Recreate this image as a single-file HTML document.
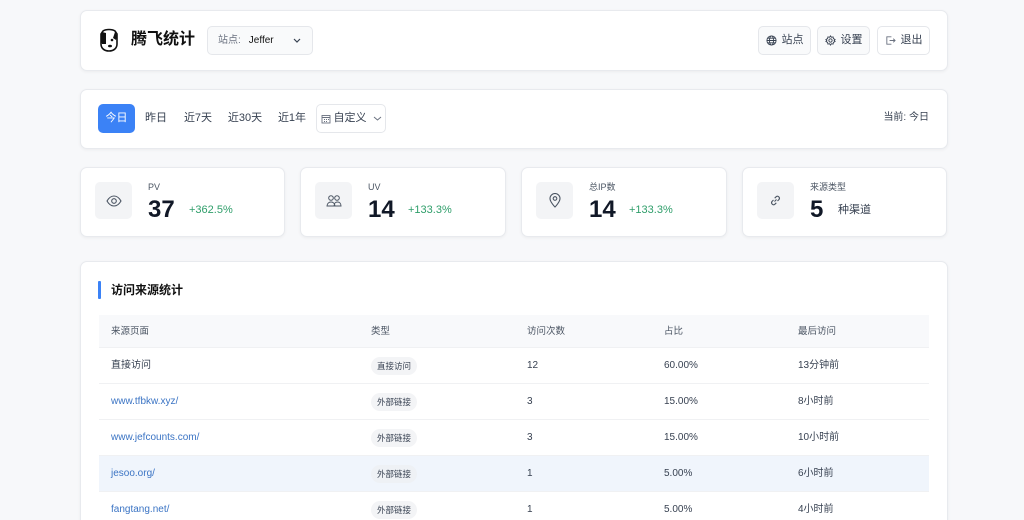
<!DOCTYPE html>
<html><head><meta charset="utf-8">
<style>
*{box-sizing:border-box;margin:0;padding:0;line-height:1.2}
html,body{width:1024px;height:520px;overflow:hidden}
body{background:#f7f8fa;font-family:"Liberation Sans","Noto Sans CJK SC",sans-serif;color:#1f2937;position:relative}
.card{position:absolute;background:#fff;border:1px solid #e8eaee;border-radius:7px;box-shadow:0 1px 3px rgba(0,0,0,.05)}
.abs{position:absolute}
.btn{position:absolute;top:15px;height:29px;border:1px solid #e5e7eb;border-radius:5px;background:#f9fafb;font-size:11px;color:#374151;display:flex;align-items:center;justify-content:center;gap:5px}
.tab{position:absolute;top:14px;height:29px;font-size:11px;color:#374151;display:flex;align-items:center;justify-content:center}
.ico{position:absolute;left:14px;top:14px;width:37px;height:37px;border-radius:5px;background:#f3f4f6;display:flex;align-items:center;justify-content:center}
.lbl{position:absolute;left:67px;top:13px;font-size:9px;line-height:12px;color:#4b5563}
.num{position:absolute;left:67px;top:28px;font-size:24px;line-height:28px;font-weight:bold;color:#111827}
.pct{position:absolute;top:35px;font-size:11px;line-height:14px;color:#2f9e6a}
.row{position:absolute;left:18px;width:830px;height:36px;border-bottom:1px solid #f0f1f3;font-size:10px;color:#374151}
.row span{position:absolute;top:11px;line-height:14px;height:14px;display:flex;align-items:center}
.row span.tag{background:#f3f4f6;border-radius:9px;padding:0 6px;font-size:8.5px;top:9px;height:18px}
.link{color:#3b74c4}
</style></head><body>
<div class="card" style="left:80px;top:10px;width:868px;height:61px">
  <svg class="abs" style="left:18px;top:17px" width="20" height="24" viewBox="0 0 20 24"><path d="M4 3c3-2 9-2 12 0l2 3v10c0 4-3 7-8 7s-8-3-8-7V6z" fill="#fff" stroke="#111" stroke-width="1.6"/><path d="M3 4c-2 2-2 8 0 12h4V5z" fill="#111"/><path d="M16 4c2 2 2 6 1 8l-3-2z" fill="#111"/><circle cx="13" cy="12" r="1.3" fill="#111"/><ellipse cx="11" cy="18" rx="2" ry="1.3" fill="#111"/></svg>
  <div class="abs" style="left:50px;top:19px;font-size:16px;line-height:20px;font-weight:bold;color:#111">腾飞统计</div>
  <div class="abs" style="left:126px;top:15px;width:106px;height:29px;border:1px solid #e5e7eb;border-radius:5px;background:#f9fafb;font-size:10px;display:flex;align-items:center">
    <span style="margin-left:10px;color:#6b7280;line-height:12px">站点:</span><span style="margin-left:8px;color:#111;line-height:12px">Jeffer</span>
    <svg class="abs" style="left:85px;top:11px" width="8" height="6" viewBox="0 0 8 6"><path d="M1 1l3 3 3-3" fill="none" stroke="#374151" stroke-width="1.2"/></svg>
  </div>
  <div class="btn" style="left:677px;width:53px"><svg width="11" height="11" viewBox="0 0 12 12" fill="none" stroke="#374151" stroke-width="1"><circle cx="6" cy="6" r="5"/><ellipse cx="6" cy="6" rx="2.2" ry="5"/><path d="M1 6h10M1.8 3.5h8.4M1.8 8.5h8.4"/></svg>站点</div>
  <div class="btn" style="left:736px;width:53px"><svg width="11" height="11" viewBox="0 0 12 12" fill="none" stroke="#374151" stroke-width="1"><circle cx="6" cy="6" r="1.8"/><path d="M6 1l1 1.5 1.8-.4.4 1.8L11 5l-1 1 1 1-1.8 1.1-.4 1.8L7 9.5 6 11l-1-1.5-1.8.4-.4-1.8L1 7l1-1-1-1 1.8-1.1.4-1.8L5 2.5z"/></svg>设置</div>
  <div class="btn" style="left:796px;width:53px;background:#fff"><svg width="11" height="11" viewBox="0 0 12 12" fill="none" stroke="#6b7280" stroke-width="1"><path d="M7 2H2v8h5M5 6h6M9 4l2 2-2 2"/></svg>退出</div>
</div>
<div class="card" style="left:80px;top:89px;width:868px;height:60px">
  <div class="tab" style="left:17px;width:37px;background:#3b82f6;color:#fff;border-radius:5px">今日</div>
  <div class="tab" style="left:60px;width:30px">昨日</div>
  <div class="tab" style="left:100px;width:34px">近7天</div>
  <div class="tab" style="left:145px;width:38px">近30天</div>
  <div class="tab" style="left:196px;width:30px">近1年</div>
  <div class="tab" style="left:235px;width:70px;border:1px solid #e5e7eb;border-radius:5px;gap:3px"><svg width="10" height="10" viewBox="0 0 10 10" fill="none" stroke="#6b7280" stroke-width=".9"><rect x="1" y="1.5" width="8" height="7.5"/><path d="M1 3.5h8M3 5.5h1M5 5.5h1M7 5.5h1M3 7.5h1M5 7.5h1"/></svg>自定义<svg width="9" height="6" viewBox="0 0 9 6" style="margin-left:3px"><path d="M1 1l3.5 3L8 1" fill="none" stroke="#6b7280" stroke-width="1"/></svg></div>
  <div class="abs" style="right:18px;top:21px;font-size:10px;line-height:14px;color:#374151">当前: 今日</div>
</div>

<div class="card" style="left:80px;top:167px;width:205px;height:70px">
  <div class="ico"><svg width="16" height="12" viewBox="0 0 16 12" fill="none" stroke="#4b5563" stroke-width="1.1"><path d="M1 6c2-3.5 4.5-5 7-5s5 1.5 7 5c-2 3.5-4.5 5-7 5S3 9.5 1 6z"/><circle cx="8" cy="6" r="2.3"/></svg></div>
  <div class="lbl">PV</div><div class="num">37</div><div class="pct" style="left:108px">+362.5%</div>
</div>
<div class="card" style="left:300px;top:167px;width:206px;height:70px">
  <div class="ico"><svg width="16" height="14" viewBox="0 0 16 14" fill="none" stroke="#4b5563" stroke-width="1"><circle cx="5" cy="4" r="2.3"/><circle cx="11" cy="4" r="2.3"/><path d="M1 12c0-2.5 2-4 4-4s4 1.5 4 4zM8 12c0-2.5 1.5-4 3.5-4S15 9.5 15 12z"/></svg></div>
  <div class="lbl">UV</div><div class="num">14</div><div class="pct" style="left:107px">+133.3%</div>
</div>
<div class="card" style="left:521px;top:167px;width:206px;height:70px">
  <div class="ico"><svg width="12" height="15" viewBox="0 0 12 15" fill="none" stroke="#4b5563" stroke-width="1.1"><path d="M6 14s5-5 5-8.5A5 5 0 0 0 1 5.5C1 9 6 14 6 14z"/><circle cx="6" cy="5.5" r="1.8"/></svg></div>
  <div class="lbl">总IP数</div><div class="num">14</div><div class="pct" style="left:107px">+133.3%</div>
</div>
<div class="card" style="left:742px;top:167px;width:205px;height:70px">
  <div class="ico"><svg width="13" height="13" viewBox="0 0 13 13" fill="none" stroke="#4b5563" stroke-width="1.1"><path d="M5.5 7.5l2-2M4.5 6l-1.5 1.5a2 2 0 0 0 2.8 2.8L7.3 8.8M8.5 7l1.5-1.5a2 2 0 0 0-2.8-2.8L5.7 4.2"/></svg></div>
  <div class="lbl">来源类型</div><div class="num">5</div><div class="abs" style="left:95px;top:35px;font-size:11px;line-height:14px;color:#374151">种渠道</div>
</div>

<div class="card" style="left:80px;top:261px;width:868px;height:280px">
  <div class="abs" style="left:17px;top:19px;width:3px;height:18px;background:#3b82f6;border-radius:1px"></div>
  <div class="abs" style="left:30px;top:20px;font-size:12px;line-height:16px;font-weight:bold;color:#111">访问来源统计</div>
  <div class="row" style="top:53px;height:33px;background:#f8f9fb;font-size:9.5px;color:#4b5563"><span style="left:12px;top:10px">来源页面</span><span style="left:272px;top:10px">类型</span><span style="left:428px;top:10px">访问次数</span><span style="left:565px;top:10px">占比</span><span style="left:699px;top:10px">最后访问</span></div>
  <div class="row" style="top:86px"><span style="left:12px">直接访问</span><span class="tag" style="left:272px">直接访问</span><span style="left:428px">12</span><span style="left:565px">60.00%</span><span style="left:699px">13分钟前</span></div>
  <div class="row" style="top:122px"><span class="link" style="left:12px">www.tfbkw.xyz/</span><span class="tag" style="left:272px">外部链接</span><span style="left:428px">3</span><span style="left:565px">15.00%</span><span style="left:699px">8小时前</span></div>
  <div class="row" style="top:158px"><span class="link" style="left:12px">www.jefcounts.com/</span><span class="tag" style="left:272px">外部链接</span><span style="left:428px">3</span><span style="left:565px">15.00%</span><span style="left:699px">10小时前</span></div>
  <div class="row" style="top:194px;background:#f0f5fc"><span class="link" style="left:12px">jesoo.org/</span><span class="tag" style="left:272px;background:#eef1f5">外部链接</span><span style="left:428px">1</span><span style="left:565px">5.00%</span><span style="left:699px">6小时前</span></div>
  <div class="row" style="top:230px"><span class="link" style="left:12px">fangtang.net/</span><span class="tag" style="left:272px">外部链接</span><span style="left:428px">1</span><span style="left:565px">5.00%</span><span style="left:699px">4小时前</span></div>
</div>
</body></html>
